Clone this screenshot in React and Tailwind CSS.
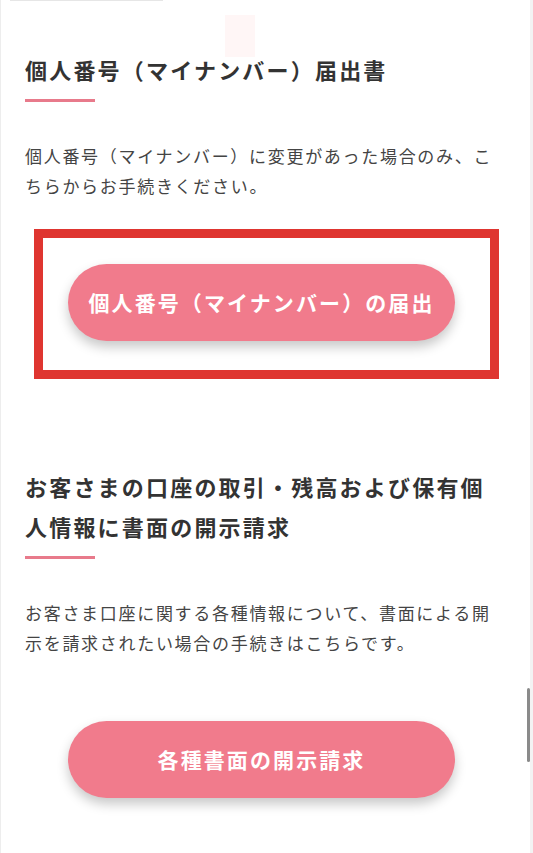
const jp = { fontFamily: '"Noto Sans CJK JP", "Noto Sans", sans-serif' };

const Section = ({ title, body, button, highlight }) => (
  <section>
    <h2 className="text-[22px] font-bold leading-[40px] tracking-[0.1em] text-[#333333]">{title}</h2>
    <div className="mt-[10px] h-[3px] w-[70px] bg-[#e87a8b]" />
    <p className="mt-[39px] text-[17px] leading-[30px] tracking-[0.1em] text-[#444444]">{body}</p>
    <div className="relative mt-[63px] flex justify-center">
      {highlight && (
        <div className="pointer-events-none absolute left-[9px] right-[-1px] top-[-35px] bottom-[-38px] border-[9px] border-[#df3530]" />
      )}
      <a
        href="#"
        className="flex h-[77px] w-[387px] items-center justify-center rounded-full bg-[#f17b8c] text-[21px] font-bold tracking-[0.1em] text-white shadow-[0_6px_12px_rgba(0,0,0,0.22)]"
      >
        {button}
      </a>
    </div>
  </section>
);

export default function App() {
  return (
    <div className="relative h-[853px] w-[533px] overflow-hidden bg-white" style={jp}>
      <div className="absolute left-0 top-0 h-full w-[1px] bg-[#ededed]" />
      <div className="absolute right-0 top-0 h-full w-[3px] bg-[#f3f3f3]" />
      <div className="absolute left-[10px] top-0 h-[1px] w-[153px] bg-[#e6e6e6]" />
      <div className="absolute left-[225px] top-[15px] h-[42px] w-[30px] bg-[#fff6f6]" />
      <div className="absolute left-[527px] top-[688px] h-[74px] w-[3px] rounded-full bg-[#8a8a8a]" />

      <div className="pl-[25px] pt-[49px]">
        <div className="w-[473px]">
          <Section
            title="個人番号（マイナンバー）届出書"
            body="個人番号（マイナンバー）に変更があった場合のみ、こちらからお手続きください。"
            button="個人番号（マイナンバー）の届出"
            highlight
          />
          <div className="mt-[125px]">
            <Section
              title="お客さまの口座の取引・残高および保有個人情報に書面の開示請求"
              body="お客さま口座に関する各種情報について、書面による開示を請求されたい場合の手続きはこちらです。"
              button="各種書面の開示請求"
            />
          </div>
        </div>
      </div>
    </div>
  );
}
